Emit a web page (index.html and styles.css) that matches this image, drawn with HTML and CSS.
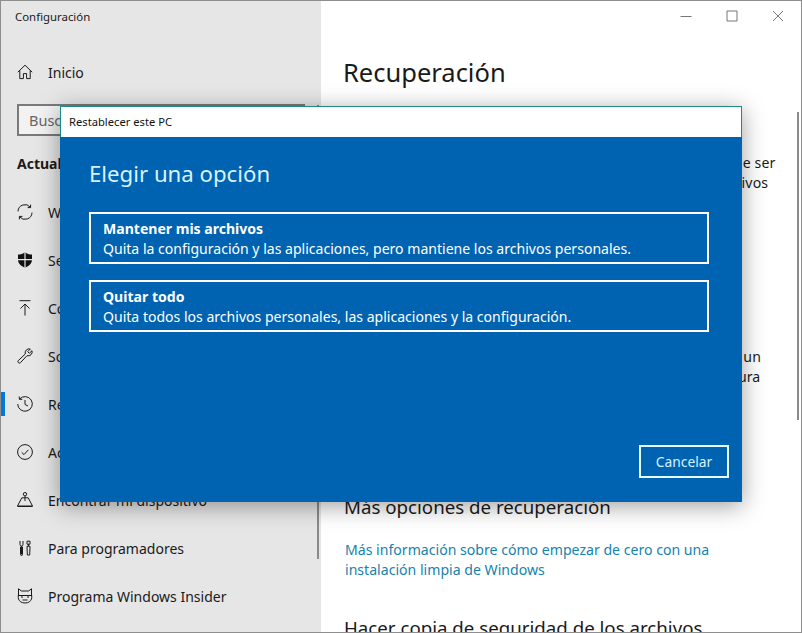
FILE: index.html
```html
<!DOCTYPE html>
<html lang="es">
<head>
<meta charset="utf-8">
<title>Configuración</title>
<link rel="stylesheet" href="styles.css">
</head>
<body>
<div class="window">
  <aside class="sidebar">
    <div class="app-title">Configuración</div>
    <a class="nav-row home">
      <svg class="icon" viewBox="0 0 16 16"><path d="M.8 8.200 8 1.200l7.200 7M2.800 6.600v8h3.600V9.600h3.200v5h3.600v-8"/></svg>
      <span>Inicio</span>
    </a>
    <div class="search">Buscar una configuración</div>
    <div class="section-title">Actualización y seguridad</div>
    <nav class="nav">
      <a class="nav-row">
        <svg class="icon" viewBox="0 0 16 16"><path d="M1 7.400A7 7 0 0 1 13.400 3.200M15 8.600A7 7 0 0 1 2.600 12.800M13.600.6v3h-3M2.400 15.400v-3h3"/></svg>
        <span>Windows Update</span>
      </a>
      <a class="nav-row">
        <svg class="icon" viewBox="0 0 16 16"><path class="solid" d="M8 .3c2 1.600 4.400 2.300 7 2.300v5.200c0 3.600-3 6.400-7 7.900-4-1.500-7-4.300-7-7.900V2.600c2.600 0 5-.7 7-2.300Z"/><path class="cut" d="M8 0v16M0 7.700h16"/></svg>
        <span>Seguridad de Windows</span>
      </a>
      <a class="nav-row">
        <svg class="icon" viewBox="0 0 16 16"><path d="M2.500.7h11M8 15.500V4M3.500 8.500 8 4l4.500 4.500"/></svg>
        <span>Copia de seguridad</span>
      </a>
      <a class="nav-row">
        <svg class="icon" viewBox="0 0 16 16"><path d="M15 2.700 12.300 5.300 10.700 3.700 13.300 1a4 4 0 0 0-5 5L1.200 12.700a1.500 1.500 0 0 0 2.100 2.100L10 7.700a4 4 0 0 0 5-5Z"/></svg>
        <span>Solucionar problemas</span>
      </a>
      <a class="nav-row active">
        <svg class="icon" viewBox="0 0 16 16"><path d="M2.600 3A7.300 7.300 0 1 1 .7 8M2.200 .5 2.400 3.300l2.900 0M8 4v4.500l3 1.500"/></svg>
        <span>Recuperación</span>
      </a>
      <a class="nav-row">
        <svg class="icon" viewBox="0 0 16 16"><circle cx="8" cy="8" r="7.400"/><path d="m4.700 8.300 2.300 2.300 4.400-4.800"/></svg>
        <span>Activación</span>
      </a>
      <a class="nav-row">
        <svg class="icon" viewBox="0 0 16 16"><circle cx="8" cy="2.200" r="1.700"/><path d="M8 4v5M4.800 5.800h6.400L15.500 14H.5ZM.5 14.500h15"/></svg>
        <span>Encontrar mi dispositivo</span>
      </a>
      <a class="nav-row">
        <svg class="icon" viewBox="0 0 16 16"><path d="M3 1v3.500a1.500 1.500 0 0 0 3 0V1M4.500 6v8.500M3.500 7h2v7.500a1 1 0 0 1-2 0ZM10 1.200h3v3h-3ZM11.500 4.200v2M10 6.200h3l-.3 8.800h-2.400Z"/></svg>
        <span>Para programadores</span>
      </a>
      <a class="nav-row">
        <svg class="icon" viewBox="0 0 16 16"><path d="M1.500 .8 4.500 3h7l3-2.200v6.700c.4 1.200.4 2.400 0 3.500-.8 2.300-3 4-6.500 4s-5.700-1.700-6.500-4c-.4-1.100-.4-2.300 0-3.500ZM.8 7.500h14.400M5 7.500v2.500M11 7.500v2.500M5.500 12h5"/></svg>
        <span>Programa Windows Insider</span>
      </a>
    </nav>
    <div class="sidebar-scroll"></div>
  </aside>

  <main class="main">
    <div class="controls">
      <svg class="ctl" viewBox="0 0 12 12"><path d="M.5 6.500h11"/></svg>
      <svg class="ctl" viewBox="0 0 12 12"><path d="M1 1h10v10H1z"/></svg>
      <svg class="ctl" viewBox="0 0 12 12"><path d="m1 1 10 10M11 1 1 11"/></svg>
    </div>
    <h1>Recuperación</h1>
    <h2 class="hidden-h">Restablecer este PC</h2>
    <p class="para first">Si el equipo no funciona correctamente, restablecerlo puede ser<br>muy valioso. Te permite elegir si quieres conservar los archivos<br>personales o quitarlos y luego reinstala Windows.</p>
    <div class="btn-fake">Introducción</div>
    <h2 class="hidden-h second">Inicio avanzado</h2>
    <p class="para middle">Inicia desde un dispositivo o disco (como una unidad USB o un<br>DVD), cambia el firmware del equipo o la configuración segura</p>
    <h2 class="more">Más opciones de recuperación</h2>
    <a class="link">Más información sobre cómo empezar de cero con una<br>instalación limpia de Windows</a>
    <h2 class="backup">Hacer copia de seguridad de los archivos</h2>
    <div class="main-scroll"></div>
  </main>

  <section class="dialog">
    <header class="dialog-title">Restablecer este PC</header>
    <div class="dialog-body">
      <div class="dialog-heading">Elegir una opción</div>
      <div class="option">
        <strong>Mantener mis archivos</strong>
        <span>Quita la configuración y las aplicaciones, pero mantiene los archivos personales.</span>
      </div>
      <div class="option">
        <strong>Quitar todo</strong>
        <span>Quita todos los archivos personales, las aplicaciones y la configuración.</span>
      </div>
      <div class="dialog-actions">
        <div class="cancel">Cancelar</div>
      </div>
    </div>
  </section>
</div>
</body>
</html>
```

FILE: styles.css
```css
* { box-sizing: border-box; }
html, body { margin: 0; padding: 0; }
body {
  width: 802px;
  height: 633px;
  overflow: hidden;
  font-family: "Noto Sans", "Open Sans", sans-serif;
  color: #1a1a1a;
  background: #fff;
}
.window {
  position: relative;
  width: 802px;
  height: 633px;
  display: flex;
  border: 1px solid #8e8e8e;
  overflow: hidden;
}
.sidebar {
  position: relative;
  width: 320px;
  flex: none;
  background: #e6e6e6;
  display: flex;
  flex-direction: column;
}
.app-title {
  font-size: 11.400px;
  line-height: 16px;
  padding: 8px 0 0 14px;
  height: 47px;
}
.nav-row {
  display: flex;
  align-items: center;
  height: 48px;
  font-size: 14px;
  white-space: nowrap;
  position: relative;
}
.nav-row .icon { margin: 0 15px 0 16px; }
.icon {
  width: 16px;
  height: 16px;
  flex: none;
  fill: none;
  stroke: #1a1a1a;
  stroke-width: 1;
}
.icon .solid { fill: #111; stroke: none; }
.icon .cut { stroke: #e6e6e6; stroke-width: 1.200; }
.nav-row.active::before {
  content: "";
  position: absolute;
  left: 0;
  top: 12px;
  width: 4px;
  height: 24px;
  background: #0078d7;
}
.search {
  margin: 8px 0 0 16px;
  width: 288px;
  height: 32px;
  border: 2px solid #7a7a7a;
  background: #f2f2f2;
  font-size: 14.500px;
  line-height: 28px;
  padding-left: 10px;
  color: #666;
  white-space: nowrap;
  overflow: hidden;
}
.section-title {
  margin: 17px 0 0 16px;
  font-size: 14px;
  font-weight: 700;
  line-height: 22px;
  height: 35px;
}
.sidebar-scroll {
  position: absolute;
  left: 316px;
  top: 104px;
  width: 2px;
  height: 454px;
  background: #8a8a8a;
}
.main {
  position: relative;
  flex: 1;
  min-width: 0;
  padding-left: 22px;
  background: #fff;
  overflow: hidden;
}
.controls {
  position: absolute;
  top: 9px;
  right: 17px;
  display: flex;
  gap: 34px;
}
.ctl {
  width: 12px;
  height: 12px;
  fill: none;
  stroke: #777;
  stroke-width: 1;
}
h1 {
  margin: 51px 0 0;
  font-size: 25.500px;
  font-weight: 400;
  line-height: 40px;
}
h2 {
  margin: 0;
  font-size: 18.700px;
  font-weight: 400;
  line-height: 26px;
  white-space: nowrap;
}
.hidden-h { margin-top: 18px; }
.para {
  margin: 0;
  font-size: 14.100px;
  letter-spacing: .15px;
  line-height: 20px;
  white-space: nowrap;
}
.first { margin-top: 17px; }
.btn-fake {
  margin-top: 20px;
  width: 120px;
  height: 32px;
  background: #ccc;
  font-size: 14px;
  line-height: 32px;
  text-align: center;
}
.second { margin-top: 44px; }
.middle { margin-top: 12px; letter-spacing: .08px; }
.more { margin: 107px 0 0 1px; }
.link {
  display: block;
  margin: 20px 0 0 2px;
  color: #1583ad;
  font-size: 14.100px;
  line-height: 20px;
  white-space: nowrap;
}
.backup { margin: 35px 0 0 1px; }
.main-scroll {
  position: absolute;
  right: 2px;
  top: 111px;
  width: 2px;
  height: 308px;
  background: #8a8a8a;
}
.dialog {
  position: absolute;
  left: 59px;
  top: 105px;
  width: 682px;
  height: 396px;
  display: flex;
  flex-direction: column;
  background: #0063b1;
  box-shadow: 0 4px 22px rgba(0, 0, 0, .38);
}
.dialog-title {
  height: 31px;
  flex: none;
  background: #fff;
  color: #111;
  font-size: 11.200px;
  line-height: 30px;
  padding-left: 8px;
  border: 1px solid #1c8a88;
  border-bottom: 0;
}
.dialog-body {
  flex: 1;
  display: flex;
  flex-direction: column;
  padding: 19px 13px 24px 29px;
  color: #fff;
}
.dialog-heading {
  font-size: 22.200px;
  line-height: 36px;
  font-weight: 400;
  color: #d9f2ff;
  margin-bottom: 20px;
}
.option {
  width: 620px;
  height: 52px;
  border: 2px solid #fff;
  padding: 5px 0 0 12px;
  margin-bottom: 16px;
  display: flex;
  flex-direction: column;
  font-size: 14.050px;
  line-height: 20px;
  white-space: nowrap;
}
.option strong { font-weight: 700; }
.dialog-actions {
  margin-top: auto;
  display: flex;
  justify-content: flex-end;
}
.cancel {
  width: 90px;
  height: 33px;
  border: 2px solid #e6fbff;
  color: #d9f2ff;
  font-size: 13.800px;
  line-height: 29px;
  text-align: center;
}
```
